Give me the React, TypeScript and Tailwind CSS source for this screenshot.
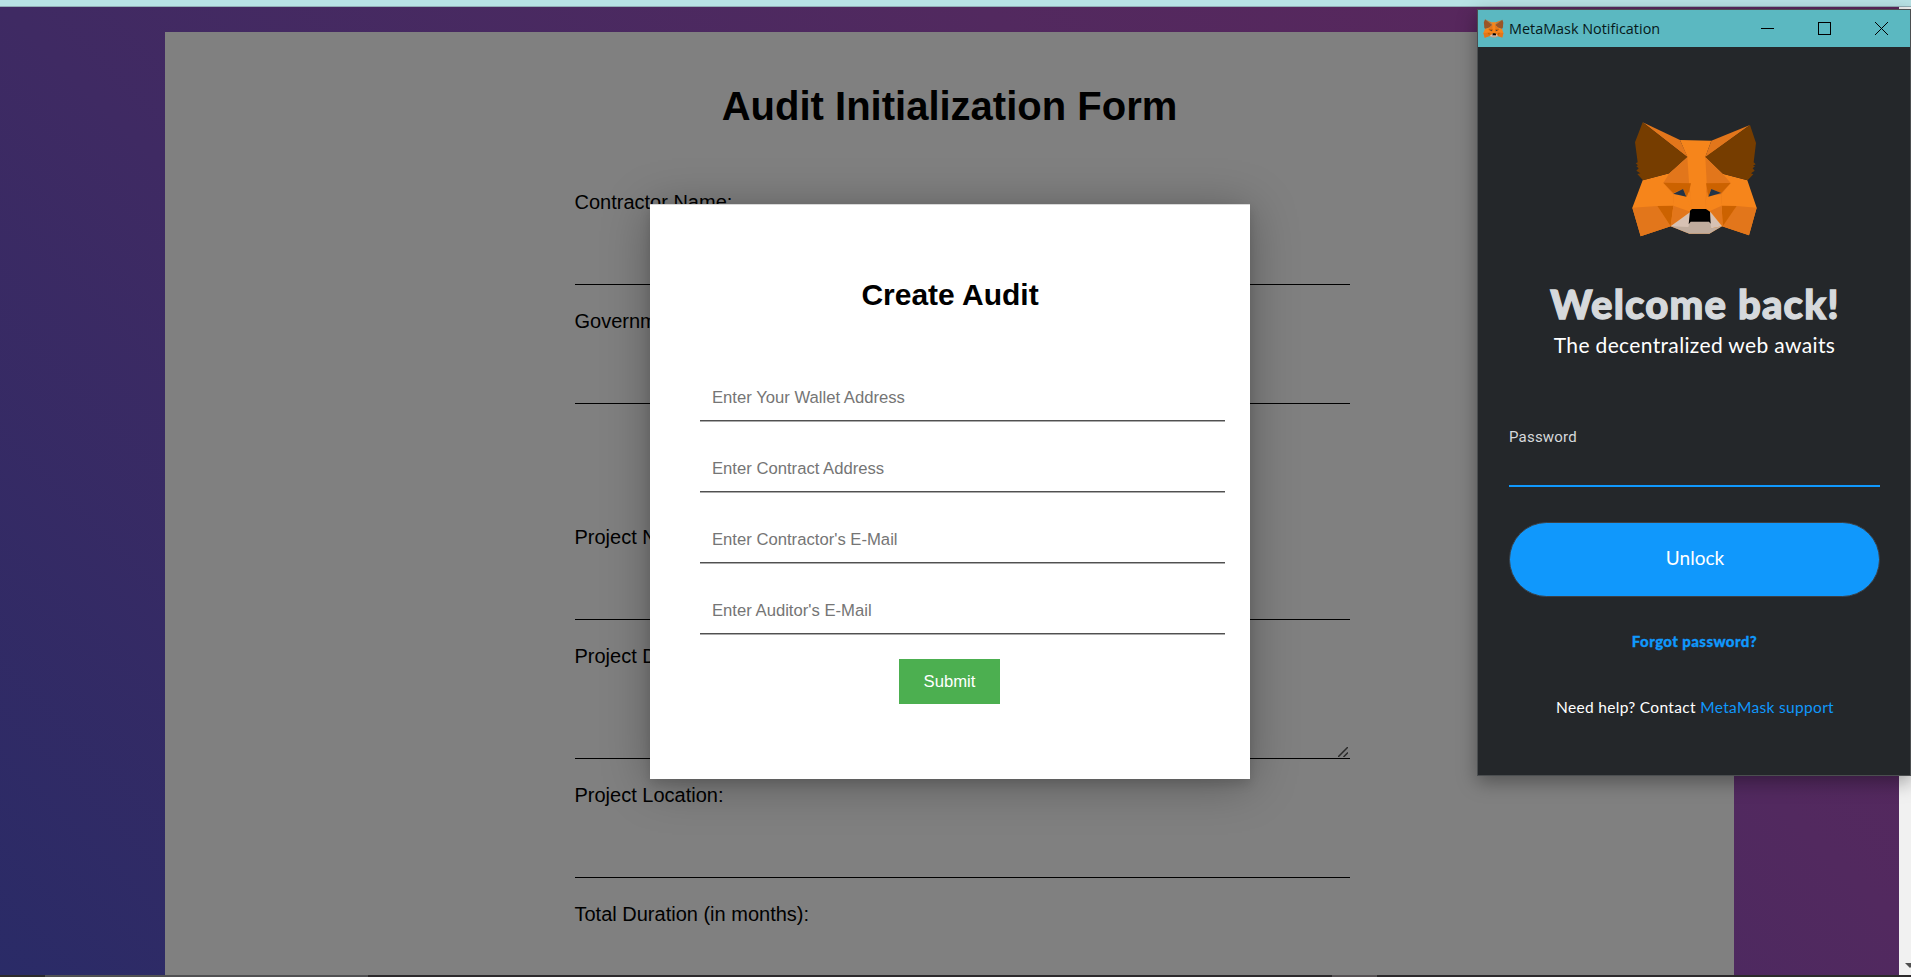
import React from "react";

function Fox({ className, ear = "#763d00" }: { className: string; ear?: string }) {
  return (
    <svg viewBox="60 45 390 355" className={className} preserveAspectRatio="none" aria-hidden="true">
      <polygon fill="#f6851b" points="98,226 178,205 232,156 210,105 304,107 286,156 338,206 412,226 440,308 417,391 336,364 298,386 238,386 182,364 92,394 67,308" />
      <polygon fill="#e2761b" points="98,52 210,105 234,158" />
      <polygon fill="#e2761b" points="420,60 304,107 285,158" />
      <polygon fill={ear} points="98,52 232,156 178,205 99,226 82,207 91,205 79,197 86,190 79,184 84,181 77,175 83,172 75,112" />
      <polygon fill={ear} points="420,60 286,156 338,206 413,226 430,208 423,205 434,197 428,190 435,184 429,182 437,178 431,172 438,114" />
      <polygon fill="#e2761b" points="232,156 178,205 160,234 190,268 190,298 200,270 240,262 246,310 237,232" />
      <polygon fill="#e2761b" points="286,156 338,206 362,234 334,268 334,298 322,270 290,262 286,310 290,232" />
      <polygon fill="#cc6200" points="160,233 243,235 238,256 230,276 219,252 190,264" />
      <polygon fill="#cc6200" points="362,234 288,235 292,256 294,276 304,252 334,264" />
      <polygon fill="#f6851b" points="190,268 228,275 243,312 240,322 190,302" />
      <polygon fill="#f6851b" points="334,268 294,275 286,312 302,322 334,302" />
      <polygon fill="#233447" points="190,266 219,252 229,275" />
      <polygon fill="#233447" points="334,264 304,252 295,275" />
      <polygon fill="#e2761b" points="67,308 142,303 182,364 92,394" />
      <polygon fill="#e2761b" points="440,308 380,303 336,364 417,391" />
      <polygon fill="#cc6200" points="142,303 190,302 182,364" />
      <polygon fill="#cc6200" points="380,303 335,302 338,364" />
      <polygon fill="#e2761b" points="190,302 241,320 182,364" />
      <polygon fill="#e2761b" points="335,302 300,318 338,364" />
      <polygon fill="#d7c1b3" points="182,364 240,322 302,322 336,364 304,370 220,370" />
      <polygon fill="#c0ac9d" points="182,364 235,366 240,350 300,350 304,370 336,364 298,386 238,386" />
      <polygon fill="#000000" points="246,312 288,312 300,320 302,356 297,350 242,350 236,358 240,317" />
    </svg>
  );
}

const fields: { label: string; box: string }[] = [
  { label: "Contractor Name:", box: "h-[60px] mb-[25px]" },
  { label: "Government Name:", box: "h-[60px] mb-[122px]" },
  { label: "Project Name:", box: "h-[60px] mb-[25px]" },
  { label: "Project Description:", box: "h-[80px] mb-[25px]" },
  { label: "Project Location:", box: "h-[60px] mb-[25px]" },
  { label: "Total Duration (in months):", box: "h-[60px]" },
];

const prompts = [
  "Enter Your Wallet Address",
  "Enter Contract Address",
  "Enter Contractor's E-Mail",
  "Enter Auditor's E-Mail",
];

function AuditForm() {
  return (
    <div className="ml-[165px] mt-[25px] flex h-[943px] w-[1569px] flex-col items-center overflow-hidden bg-[#808080] text-black">
      <h1 className="mt-[51px] text-[40px] leading-[46px] font-bold">Audit Initialization Form</h1>
      <div className="mt-[62px] ml-[25px] flex w-[775px] flex-col">
        {fields.map((f) => (
          <div key={f.label} className="flex flex-col">
            <span className="h-[34px] text-[20px] leading-[23px]">{f.label}</span>
            <div className={`flex items-end justify-end border-b border-black ${f.box}`}>
              {f.label === "Project Description:" && (
                <svg className="mr-0.5 mb-px size-[10px]" viewBox="0 0 10 10" stroke="#2a2a2a" strokeWidth="1.5">
                  <path d="M0 10 L10 0 M5.5 10 L10 5.5" />
                </svg>
              )}
            </div>
          </div>
        ))}
      </div>
    </div>
  );
}

function CreateAudit() {
  return (
    <div className="absolute top-[204px] left-[650px] flex h-[575px] w-[600px] flex-col border-t border-[#d8d8d8] bg-white shadow-[0_5px_10px_rgba(0,0,0,0.12),0_5px_45px_rgba(0,0,0,0.3)]">
      <h2 className="mt-[72px] text-center text-[30px] leading-[35px] font-bold text-black">Create Audit</h2>
      <div className="mt-[63px] ml-[50px] flex w-[525px] flex-col gap-[25px]">
        {prompts.map((p) => (
          <div key={p} className="flex h-[46px] items-center border-b border-[#505050] px-3 text-[16.67px] text-[#757575] shadow-[0_1px_0_#ababab]">
            {p}
          </div>
        ))}
      </div>
      <div className="mt-[25px] ml-[249px] flex">
        <button className="h-[45px] w-[101px] bg-[#4caf50] text-[16.67px] text-white">Submit</button>
      </div>
    </div>
  );
}

function WalletWindow() {
  return (
    <div className="absolute top-[9px] left-[1477px] flex h-[767px] w-[434px] flex-col border border-[#4b4e50] bg-[#24272a] shadow-[0_6px_18px_rgba(0,0,0,0.35)]">
      <div className="flex h-[37px] shrink-0 items-center bg-[#5bb8c1] pl-[5px] font-['Open_Sans',sans-serif] text-[#06181a]">
        <Fox className="h-[19px] w-[21px]" ear="#9a5527" />
        <span className="ml-[5px] text-[14.4px]">MetaMask Notification</span>
        <svg className="ml-auto mr-[21px] h-[14px] w-[129px]" viewBox="0 0 129 14" fill="none" stroke="#000">
          <path d="M1 6.5 H14" />
          <rect x="58.5" y="0.5" width="12" height="12" />
          <path d="M115 0 L128 13 M128 0 L115 13" />
        </svg>
      </div>
      <div className="flex flex-col items-center font-['Lato',sans-serif]">
        <Fox className="mt-[73px] ml-[2px] h-[118.33px] w-[130px]" />
        <h2 className="mt-[42px] ml-[2px] text-[40px] leading-[48px] font-black tracking-[1.2px] text-[#d6d9dc] [-webkit-text-stroke:1.3px_#d6d9dc]">Welcome back!</h2>
        <p className="mt-[4px] ml-px text-[21px] leading-[25px] tracking-[0.35px] text-white">The decentralized web awaits</p>
      </div>
      <div className="mt-[70px] ml-[31px] flex h-[60px] w-[371px] flex-col border-b-2 border-[#1098fc]">
        <span className="font-['Roboto',sans-serif] text-[15px] leading-[20px] tracking-[0.2px] text-[#d6d9dc]">Password</span>
      </div>
      <div className="flex flex-col items-center font-['Lato',sans-serif]">
        <button className="mt-[35px] h-[75px] w-[371px] rounded-full border border-[#3b4046] bg-[#1098fc] pb-[3px] pl-[8px] pr-[6px] text-[19px] text-white">Unlock</button>
        <a className="mt-[33px] ml-px text-[15px] leading-[22px] font-black tracking-[0.4px] text-[#1098fc] [-webkit-text-stroke:0.3px_#1098fc]">Forgot password?</a>
        <p className="mt-[44px] ml-[2px] text-[15.5px] leading-[22px] tracking-[0.33px] text-white">
          Need help? Contact <span className="text-[#1098fc]">MetaMask support</span>
        </p>
      </div>
    </div>
  );
}

export default function App() {
  return (
    <div className="relative flex h-[977px] w-[1911px] flex-col overflow-hidden bg-[#2c2a2c] font-['Liberation_Sans',Arial,sans-serif]">
      <div className="h-[7px] shrink-0 border-b border-[#92aeb6] bg-[#b8e2e5]" />
      <div className="flex h-[968px] shrink-0">
        <div className="h-full w-[1899px] bg-[linear-gradient(45deg,#2a2b67_0%,#3f2a63_34%,#52295f_68%,#5c265b_100%)]">
          <AuditForm />
        </div>
        <div className="flex w-[12px] flex-col justify-end overflow-hidden bg-[#f1f1f1]">
          <svg className="mb-[7px] ml-[6px] h-[5px] w-[10px]" viewBox="0 0 10 5" fill="#505050">
            <path d="M0 0 H10 L5 5 Z" />
          </svg>
        </div>
      </div>
      <div className="flex h-[2px] shrink-0">
        <div className="ml-[45px] h-full w-[323px] bg-[#505052]" />
        <div className="ml-[964px] h-full w-[45px] bg-[#575355]" />
      </div>
      <CreateAudit />
      <WalletWindow />
    </div>
  );
}
